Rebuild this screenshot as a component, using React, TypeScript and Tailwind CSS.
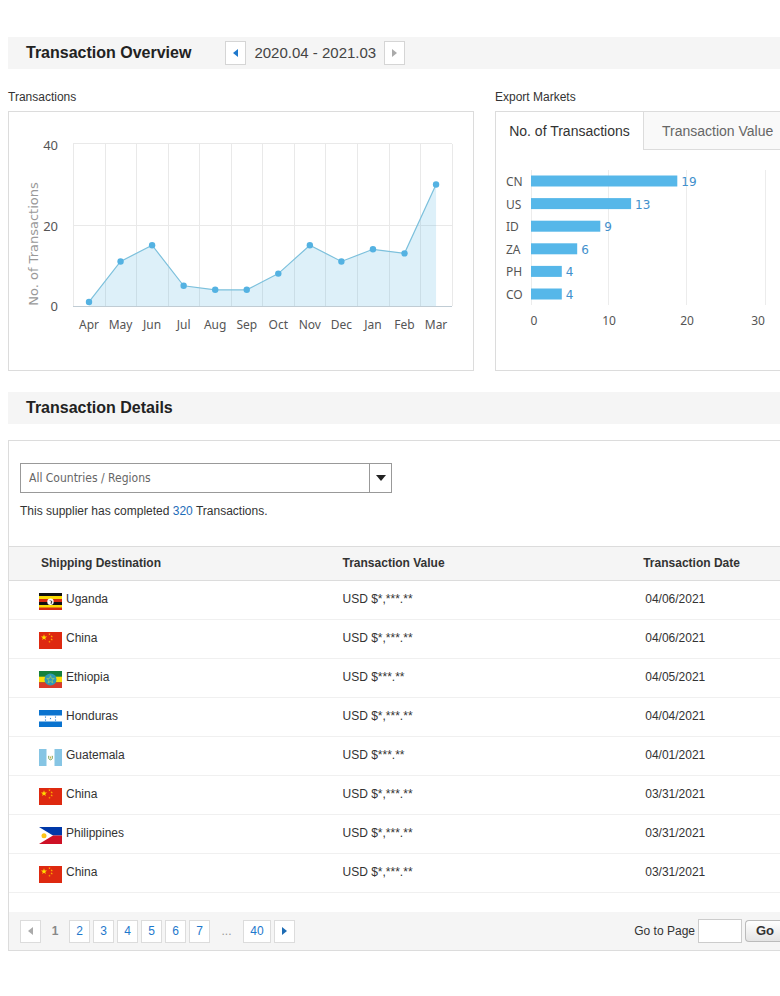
import { useState } from "react";
import type { ReactNode } from "react";

type IconProps = { direction: "left" | "right"; className?: string };

const MONTHLY = [
  { month: "Apr", count: 1 },
  { month: "May", count: 11 },
  { month: "Jun", count: 15 },
  { month: "Jul", count: 5 },
  { month: "Aug", count: 4 },
  { month: "Sep", count: 4 },
  { month: "Oct", count: 8 },
  { month: "Nov", count: 15 },
  { month: "Dec", count: 11 },
  { month: "Jan", count: 14 },
  { month: "Feb", count: 13 },
  { month: "Mar", count: 30 },
];

const MARKETS = [
  { code: "CN", count: 19 },
  { code: "US", count: 13 },
  { code: "ID", count: 9 },
  { code: "ZA", count: 6 },
  { code: "PH", count: 4 },
  { code: "CO", count: 4 },
];

const ROWS = [
  { country: "Uganda", value: "USD $*,***.**", date: "04/06/2021" },
  { country: "China", value: "USD $*,***.**", date: "04/06/2021" },
  { country: "Ethiopia", value: "USD $***.**", date: "04/05/2021" },
  { country: "Honduras", value: "USD $*,***.**", date: "04/04/2021" },
  { country: "Guatemala", value: "USD $***.**", date: "04/01/2021" },
  { country: "China", value: "USD $*,***.**", date: "03/31/2021" },
  { country: "Philippines", value: "USD $*,***.**", date: "03/31/2021" },
  { country: "China", value: "USD $*,***.**", date: "03/31/2021" },
];

// Five-pointed star as an SVG points list
function star(cx: number, cy: number, r: number) {
  return Array.from({ length: 10 }, (_, i) => {
    const radius = i % 2 ? r * 0.4 : r;
    const angle = (Math.PI / 5) * i - Math.PI / 2;
    return `${cx + radius * Math.cos(angle)},${cy + radius * Math.sin(angle)}`;
  }).join(" ");
}

const FLAGS: Record<string, ReactNode> = {
  Uganda: (
    <>
      <rect width="23" height="17" fill="#111" />
      <rect y="3" width="23" height="3" fill="#fcdc04" />
      <rect y="6" width="23" height="3" fill="#d42a10" />
      <rect y="12" width="23" height="3" fill="#fcdc04" />
      <rect y="14.5" width="23" height="2.5" fill="#d42a10" />
      <circle cx="11.5" cy="8.8" r="3.2" fill="#fff" />
      <path d="M10 7l2 1.5-.5 2.5 1.5-.5.2-2.5z" fill="#444" />
    </>
  ),
  China: (
    <>
      <rect width="23" height="17" fill="#de2910" />
      <polygon points={star(5, 5.5, 3.2)} fill="#ffde00" />
      <polygon points={star(10.5, 2.2, 1.3)} fill="#ffb000" />
      <polygon points={star(12.7, 4.4, 1.3)} fill="#ffb000" />
      <polygon points={star(12.7, 7.4, 1.3)} fill="#ffb000" />
      <polygon points={star(10.5, 9.8, 1.3)} fill="#ffb000" />
    </>
  ),
  Ethiopia: (
    <>
      <rect width="23" height="17" fill="#15803c" />
      <rect y="5.7" width="23" height="5.7" fill="#fcdd09" />
      <rect y="11.3" width="23" height="5.7" fill="#da3a2a" />
      <circle cx="11.5" cy="8.5" r="6" fill="#2f9ab8" />
      <polygon points={star(11.5, 8.7, 4)} fill="none" stroke="#9ac96a" strokeWidth="0.8" />
    </>
  ),
  Honduras: (
    <>
      <rect width="23" height="17" fill="#0a73cf" />
      <rect y="5.5" width="23" height="6" fill="#fff" />
      {[[6.5, 7], [16.5, 7], [11.5, 8.5], [6.5, 10], [16.5, 10]].map(([x, y]) => (
        <polygon key={`${x}-${y}`} points={star(x, y, 1)} fill="#0a73cf" />
      ))}
    </>
  ),
  Guatemala: (
    <>
      <rect width="23" height="17" fill="#fff" />
      <rect width="7.5" height="17" fill="#86c5e4" />
      <rect x="15.5" width="7.5" height="17" fill="#86c5e4" />
      <path d="M9.8 6.8c-.6 2 0 4 1.7 4s2.4-2 1.7-4" fill="none" stroke="#7ba35a" strokeWidth="1" />
      <rect x="10.8" y="7.5" width="1.4" height="2" fill="#c9b04a" />
    </>
  ),
  Philippines: (
    <>
      <rect width="23" height="8.5" fill="#0038a8" />
      <rect y="8.5" width="23" height="8.5" fill="#ce1126" />
      <path d="M0 0l14 8.5L0 17z" fill="#fff" />
      <circle cx="5" cy="8.7" r="2.5" fill="#fcc516" />
    </>
  ),
};

function Flag({ country }: { country: string }) {
  return (
    <svg viewBox="0 0 23 17" className="mt-[2px] h-[17px] w-[23px] shrink-0" aria-hidden="true">
      {FLAGS[country]}
    </svg>
  );
}

function Triangle({ direction, className }: IconProps) {
  return (
    <svg viewBox="0 0 5 8" className={className} fill="currentColor" aria-hidden="true">
      <path d={direction === "left" ? "M5 0v8L0 4z" : "M0 0v8l5-4z"} />
    </svg>
  );
}

function SectionBar({ title, children }: { title: string; children?: ReactNode }) {
  return (
    <div className="flex h-8 items-center bg-[#f5f5f5] pl-[18px]">
      <h2 className="text-[16px] leading-5 font-bold text-[#222]">{title}</h2>
      {children}
    </div>
  );
}

function TransactionsChart() {
  const step = 31.55;
  const px = (i: number) => 80 + i * step;
  const py = (count: number) => 194 - count * 4.05;
  const line = MONTHLY.map((m, i) => `${px(i)},${py(m.count)}`).join(" ");

  return (
    <svg viewBox="0 0 464 258" className="block w-full font-['Noto_Sans',sans-serif] text-[12px]" role="img" aria-label="Transactions per month">
      <g stroke="#e9e9e9" strokeWidth="1">
        {Array.from({ length: 13 }, (_, i) => (
          <path key={i} d={`M${Math.round(64 + i * step) + 0.5} 32V194`} />
        ))}
        <path d="M64 31.5H443M64 113.5H443" />
      </g>
      <polygon points={`${px(0)},194.5 ${line} ${px(11)},194.5`} fill="#56b4e3" fillOpacity="0.2" />
      <path d="M64 194.5H443" stroke="#c0ccd4" />
      <polyline points={line} fill="none" stroke="#7cc0dc" strokeWidth="1.2" />
      {MONTHLY.map((m, i) => (
        <g key={m.month}>
          <circle cx={px(i)} cy={py(m.count)} r="3.2" fill="#54b2e2" />
          <text x={px(i)} y="217" textAnchor="middle" fill="#555">{m.month}</text>
        </g>
      ))}
      <g className="text-[13px]" fill="#555" textAnchor="end">
        <text x="49" y="38">40</text>
        <text x="49" y="119">20</text>
        <text x="49" y="199">0</text>
      </g>
      <text transform="translate(29 132) rotate(-90)" textAnchor="middle" fill="#999" className="font-['DejaVu_Sans',sans-serif] text-[13px]">No. of Transactions</text>
    </svg>
  );
}

function MarketsChart() {
  return (
    <svg viewBox="0 0 284 220" className="block w-full font-['Noto_Sans',sans-serif] text-[12px]" role="img" aria-label="Transactions per export market">
      <path d="M35.5 20V155M112.5 20V155M190.5 20V155M269.5 20V155" stroke="#ececec" />
      {MARKETS.map((m, i) => {
        const y = 31 + i * 22.6;
        return (
          <g key={m.code}>
            <text x="10" y={y + 5} fill="#555">{m.code}</text>
            <rect x="35" y={y - 5.5} width={m.count * 7.7} height="11" fill="#56b7e9" />
            <text x={39 + m.count * 7.7} y={y + 5} fill="#4290cc" className="font-['DejaVu_Sans',sans-serif] text-[12px]">{m.count}</text>
          </g>
        );
      })}
      <g fill="#555" textAnchor="middle">
        <text x="38" y="175">0</text>
        <text x="113" y="175">10</text>
        <text x="191" y="175">20</text>
        <text x="262" y="175">30</text>
      </g>
    </svg>
  );
}

function Pagination() {
  const box = "grid h-[23px] w-[21px] place-items-center border border-[#dcdcdc] bg-white text-[#1e78cc]";
  return (
    <nav className="flex items-center gap-[3px]" aria-label="Pages">
      <button type="button" disabled aria-label="Previous page" className={box}>
        <Triangle direction="left" className="h-2 w-[5px] text-[#aaa]" />
      </button>
      <span className="w-[22px] text-center font-bold text-[#888]">1</span>
      {[2, 3, 4, 5, 6, 7].map((page) => (
        <a key={page} href={`#page-${page}`} className={box}>{page}</a>
      ))}
      <span className="w-[27px] text-center text-[#999]">...</span>
      <a href="#page-40" className="grid h-[23px] w-7 place-items-center border border-[#dcdcdc] bg-white text-[#1e78cc]">40</a>
      <button type="button" aria-label="Next page" className={box}>
        <Triangle direction="right" className="h-2 w-[5px] text-[#1e6cb4]" />
      </button>
    </nav>
  );
}

export default function App() {
  const [tab, setTab] = useState<"count" | "value">("count");
  const activeTab = "border-transparent bg-white text-[#333]";
  const idleTab = "border-[#dcdcdc] bg-[#f9f9f9] text-[#666]";

  return (
    <main className="min-h-screen overflow-x-hidden bg-white pt-[37px] pb-8 pl-2 font-['Liberation_Sans',Arial,sans-serif] text-[12px] leading-4 text-[#333]">
      <SectionBar title="Transaction Overview">
        <div className="ml-[34px] flex items-center">
          <button type="button" aria-label="Previous year" className="grid h-6 w-[21px] place-items-center border border-[#d5d5d5] bg-white">
            <Triangle direction="left" className="h-2 w-[5px] text-[#1e78cc]" />
          </button>
          <span className="px-2 text-[15px] leading-5 text-[#444]">2020.04 - 2021.03</span>
          <button type="button" aria-label="Next year" className="grid h-6 w-[21px] place-items-center border border-[#d5d5d5] bg-white">
            <Triangle direction="right" className="h-2 w-[5px] text-[#aaa]" />
          </button>
        </div>
      </SectionBar>

      <div className="mt-5 grid grid-cols-[minmax(0,466fr)_minmax(0,285fr)] gap-[21px]">
        <section>
          <h3>Transactions</h3>
          <div className="mt-[6px] border border-[#dcdcdc]">
            <TransactionsChart />
          </div>
        </section>
        <section className="flex flex-col">
          <h3>Export Markets</h3>
          <div className="mt-[6px] flex-1 border border-r-0 border-[#dcdcdc]">
            <div className="flex text-[14px] leading-5 whitespace-nowrap" role="tablist">
              <button type="button" role="tab" aria-selected={tab === "count"} onClick={() => setTab("count")} className={`h-[38px] w-[147px] shrink-0 border-b ${tab === "count" ? activeTab : idleTab}`}>
                No. of Transactions
              </button>
              <button type="button" role="tab" aria-selected={tab === "value"} onClick={() => setTab("value")} className={`h-[38px] flex-1 border-b border-l pl-[18px] text-left ${tab === "value" ? activeTab : idleTab}`}>
                Transaction Value
              </button>
            </div>
            <MarketsChart />
          </div>
        </section>
      </div>

      <div className="mt-[21px]">
        <SectionBar title="Transaction Details" />
      </div>

      <section className="mt-4 border border-r-0 border-[#dcdcdc]">
        <div className="px-[11px] pt-[22px] pb-[27px]">
          <div className="relative h-[30px] w-[372px] max-w-full">
            <select aria-label="Country or region" className="h-full w-full appearance-none border border-[#999] bg-white pl-2 font-['DejaVu_Sans_Condensed','DejaVu_Sans',sans-serif] text-[12px] text-[#666]">
              <option>All Countries / Regions</option>
              <option>China</option>
              <option>Ethiopia</option>
              <option>Guatemala</option>
              <option>Honduras</option>
              <option>Philippines</option>
              <option>Uganda</option>
            </select>
            <span className="pointer-events-none absolute inset-y-0 right-0 grid w-[23px] place-items-center border-l border-[#999]">
              <svg viewBox="0 0 10 6" className="h-[6px] w-[10px]" fill="#222" aria-hidden="true">
                <path d="M0 0h10L5 6z" />
              </svg>
            </span>
          </div>
          <p className="mt-[10px]">
            This supplier has completed <span className="text-[#1e6cb8]">320</span> Transactions.
          </p>
        </div>

        <table className="w-full table-fixed border-collapse text-left">
          <thead>
            <tr className="h-[34px] border-y border-[#dcdcdc] bg-[#f5f5f5]">
              <th className="w-[43%] pb-[2px] pl-8">Shipping Destination</th>
              <th className="w-[39%] pb-[2px] pl-[2px]">Transaction Value</th>
              <th className="pb-[2px] pl-[2px]">Transaction Date</th>
            </tr>
          </thead>
          <tbody>
            {ROWS.map((row, i) => (
              <tr key={i} className="h-[39px] border-b border-[#f0f0f0]">
                <td className="pl-[30px]">
                  <div className="flex items-start gap-1">
                    <Flag country={row.country} />
                    <span>{row.country}</span>
                  </div>
                </td>
                <td className="pb-[3px] pl-[2px]">{row.value}</td>
                <td className="pb-[3px] pl-1">{row.date}</td>
              </tr>
            ))}
          </tbody>
        </table>

        <div className="mt-[19px] flex h-[38px] items-center justify-between bg-[#f5f5f5] pl-[11px]">
          <Pagination />
          <form className="flex items-center gap-[3px]" onSubmit={(e) => e.preventDefault()}>
            <label htmlFor="goto-page">Go to Page</label>
            <input id="goto-page" type="text" className="h-6 w-11 border border-[#ccc] bg-white px-1" />
            <button type="submit" className="h-[22px] w-[35px] rounded-l-sm border border-r-0 border-[#bbb] bg-linear-to-b from-white to-[#e4e4e4] pl-1 text-[13px] font-bold">Go</button>
          </form>
        </div>
      </section>
    </main>
  );
}
